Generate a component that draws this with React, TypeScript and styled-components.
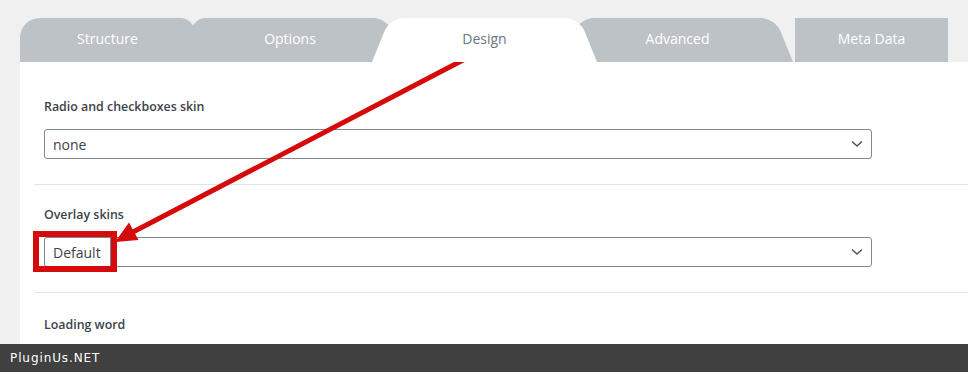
import React from 'react'
import styled, { createGlobalStyle } from 'styled-components';

const GlobalStyle = createGlobalStyle`
  html, body {
    margin: 0;
    padding: 0;
    background: #f0f0f0;
    overflow: hidden;
  }
`;

const Page = styled.div`
  position: relative;
  height: 100vh;
  display: flex;
  flex-direction: column;
  font-family: "Open Sans", "Liberation Sans", sans-serif;
`;

const Main = styled.div`
  flex: 1;
  min-height: 0;
  display: flex;
  flex-direction: column;
  padding: 18px 0 0 20px;
  overflow: hidden;
`;

const TabBar = styled.div`
  display: flex;
  height: 44px;
  flex: 0 0 44px;
`;

interface TabProps {
  $w: number;
  $ml: number;
  $z: number;
  $left?: number;
  $right?: number;
  $rl?: number;
  $rr?: number;
  $pr?: number;
  $active?: boolean;
}

const Tab = styled.div<TabProps>`
  position: relative;
  flex: 0 0 ${p => p.$w}px;
  margin-left: ${p => p.$ml}px;
  padding-right: ${p => p.$pr || 0}px;
  padding-bottom: 3px;
  box-sizing: border-box;
  z-index: ${p => p.$z};
  display: flex;
  align-items: center;
  justify-content: center;
  font-size: 14px;
  color: ${p => p.$active ? '#6b7580' : '#ffffff'};
  cursor: pointer;

  &::before, &::after {
    content: '';
    position: absolute;
    top: 0;
    bottom: 0;
    width: 60%;
    background: ${p => p.$active ? '#ffffff' : '#bdc2c7'};
    transform-origin: bottom;
    z-index: -1;
  }
  &::before {
    left: 0;
    border-top-left-radius: ${p => p.$rl || 0}px;
    transform: skewX(${p => -(p.$left || 0)}deg);
  }
  &::after {
    right: 0;
    border-top-right-radius: ${p => p.$rr || 0}px;
    transform: skewX(${p => p.$right || 0}deg);
  }
`;

const Panel = styled.div`
  flex: 1;
  background: #ffffff;
  padding-top: 15px;
`;

const Field = styled.div<{ $last?: boolean }>`
  margin-left: 14px;
  padding: ${p => p.$last ? 23 : 21}px 0 25px 10px;
  border-bottom: ${p => p.$last ? 'none' : '1px solid #e1e3e6'};
`;

const Label = styled.div`
  font-size: 12.4px;
  font-weight: 600;
  line-height: 18px;
  color: #3c434a;
  margin-bottom: 13px;
`;

const Select = styled.div`
  width: 828px;
  height: 30px;
  box-sizing: border-box;
  border: 1px solid #7e8993;
  border-radius: 3px;
  display: flex;
  align-items: center;
  justify-content: space-between;
  padding: 0 8px 0 8px;
  font-size: 14px;
  color: #3c434a;
  background: #ffffff;
`;

const Chevron = () => (
  <svg width="12" height="8" viewBox="0 0 12 8">
    <polyline points="1,1.5 6,6 11,1.5" fill="none" stroke="#50575e" strokeWidth="1.6" />
  </svg>
);

const Footer = styled.div`
  flex: 0 0 28px;
  background: #404040;
  color: #ffffff;
  display: flex;
  align-items: center;
  padding-left: 10px;
  font-family: "DejaVu Sans", sans-serif;
  font-size: 12px;
  letter-spacing: 0.9px;
`;

const Overlay = styled.svg`
  position: absolute;
  left: 0;
  top: 0;
  pointer-events: none;
`;

const Highlight = styled.div`
  position: absolute;
  left: 33px;
  top: 231px;
  width: 84px;
  height: 41px;
  box-sizing: border-box;
  border: 6px solid #d50b0b;
  box-shadow: inset -1px 0 0 #7e8993;
  pointer-events: none;
`;

const tabs: { label: string; p: TabProps }[] = [
  { label: 'Structure', p: { $w: 175, $ml: 0, $z: 1, $rl: 20, $rr: 15 } },
  { label: 'Options', p: { $w: 214, $ml: -4, $z: 2, $rl: 15, $rr: 14, $right: 22, $pr: 16 } },
  { label: 'Design', p: { $w: 225, $ml: -33, $z: 5, $rl: 14, $rr: 14, $left: 22, $right: 22, $active: true } },
  { label: 'Advanced', p: { $w: 231, $ml: -35, $z: 3, $rl: 14, $rr: 14, $left: 22, $right: 22 } },
  { label: 'Meta Data', p: { $w: 153, $ml: 2, $z: 1 } },
];

export default function App() {
  return (
    <Page>
      <GlobalStyle />
      <Main>
        <TabBar>
          {tabs.map(t => (
            <Tab key={t.label} {...t.p}>{t.label}</Tab>
          ))}
        </TabBar>
        <Panel>
          <Field>
            <Label>Radio and checkboxes skin</Label>
            <Select>none<Chevron /></Select>
          </Field>
          <Field>
            <Label>Overlay skins</Label>
            <Select>Default<Chevron /></Select>
          </Field>
          <Field $last>
            <Label>Loading word</Label>
          </Field>
        </Panel>
      </Main>
      <Footer>PluginUs.NET</Footer>

      <Highlight />
      <Overlay width="968" height="372" viewBox="0 0 968 372">
        <line x1="467" y1="58" x2="133" y2="232" stroke="#d50b0b" strokeWidth="5" />
        <polygon points="115,242 138.5,240 129,222.5" fill="#d50b0b" />
      </Overlay>
    </Page>
  );
}
